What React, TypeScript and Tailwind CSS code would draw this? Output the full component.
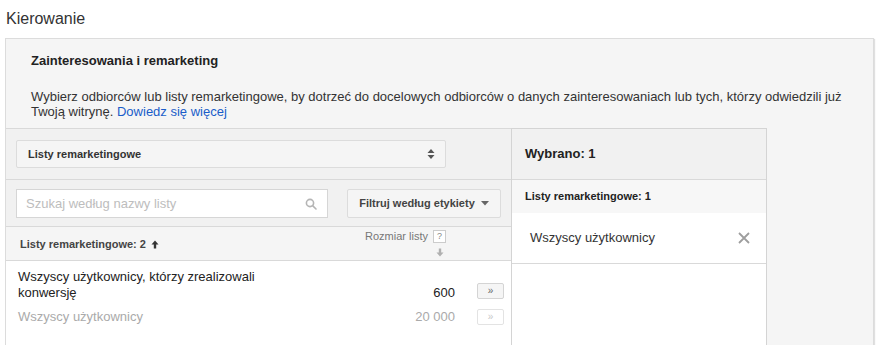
import React from 'react';

const font = { fontFamily: '"Liberation Sans", Arial, sans-serif' };

const SortCaret: React.FC = () => (
  <svg width="8" height="12" viewBox="0 0 8 12" className="text-[#555]">
    <path d="M4 1 L7.5 5 H0.5 Z" fill="currentColor" />
    <path d="M4 11 L7.5 7 H0.5 Z" fill="currentColor" />
  </svg>
);

const DownCaret: React.FC = () => (
  <svg width="8" height="5" viewBox="0 0 8 5">
    <path d="M0 0 H8 L4 4.5 Z" fill="#666" />
  </svg>
);

const SearchIcon: React.FC = () => (
  <svg width="12" height="12" viewBox="0 0 12 12" fill="none" stroke="#b5b5b5" strokeWidth="1.6">
    <circle cx="5" cy="5" r="3.6" />
    <path d="M7.6 7.6 L11 11" strokeLinecap="round" />
  </svg>
);

const ArrowUp: React.FC = () => (
  <svg width="8" height="9" viewBox="0 0 8 9">
    <path d="M4 0.5 L7.5 4.5 H5.2 V8.5 H2.8 V4.5 H0.5 Z" fill="#333" />
  </svg>
);

const ArrowDown: React.FC = () => (
  <svg width="8" height="9" viewBox="0 0 8 9">
    <path d="M4 8.5 L7.5 4.5 H5.2 V0.5 H2.8 V4.5 H0.5 Z" fill="#b0b0b0" />
  </svg>
);

const CloseIcon: React.FC = () => (
  <svg width="12" height="12" viewBox="0 0 12 12" stroke="#9e9e9e" strokeWidth="1.8">
    <path d="M1 1 L11 11 M11 1 L1 11" />
  </svg>
);

const AddButton: React.FC<{ disabled?: boolean }> = ({ disabled }) => (
  <div
    className={
      disabled
        ? 'w-[27px] h-[16px] border border-[#e3e3e3] bg-white rounded-[2px] flex items-center justify-center text-[10px] leading-none text-[#c8c8c8]'
        : 'w-[27px] h-[16px] border border-[#d4d4d4] bg-[#f5f5f5] rounded-[2px] flex items-center justify-center text-[10px] leading-none text-[#666]'
    }
  >
    »
  </div>
);

export default function App() {
  return (
    <div className="w-[879px] h-[345px] overflow-hidden bg-white" style={font}>
      <div className="pl-[6px] pt-[9px] h-[38px] text-[16px] leading-[20px] text-[#333]">Kierowanie</div>

      <div className="ml-[5px] w-[869px] h-[320px] border border-[#dcdcdc] bg-[#f5f5f5] shadow-[1px_1px_1px_rgba(0,0,0,0.12)]">
        {/* Header */}
        <div className="pl-[25px] pt-[14px] text-[13px] leading-[16px] font-bold text-[#222]">
          Zainteresowania i remarketing
        </div>
        <p className="pl-[25px] pr-[20px] mt-[20px] text-[13px] leading-[15px] text-[#333]">
          Wybierz odbiorców lub listy remarketingowe, by dotrzeć do docelowych odbiorców o danych zainteresowaniach lub tych, którzy odwiedzili już
          <br />
          Twoją witrynę. <span className="text-[#1a5dc9]">Dowiedz się więcej</span>
        </p>

        {/* Panels */}
        <div className="flex mt-[9px] h-[300px]">
          {/* Left column */}
          <div className="w-[505px] border-t border-[#d9d9d9] flex flex-col bg-white">
            <div className="bg-[#f1f1f1] border-b border-[#d9d9d9] px-[10px] py-[11px]">
              <div className="w-[430px] h-[28px] border border-[#dcdcdc] bg-[#f5f5f5] rounded-[2px] flex items-center justify-between pl-[11px] pr-[10px]">
                <span className="text-[11px] font-bold text-[#333]">Listy remarketingowe</span>
                <SortCaret />
              </div>
            </div>

            <div className="bg-[#f1f1f1] border-b border-[#d9d9d9] flex items-center justify-between pl-[10px] pr-[10px] pt-[9px] pb-[8px]">
              <div className="w-[312px] h-[29px] border border-[#d6d6d6] bg-white flex items-center justify-between pl-[9px] pr-[10px]">
                <span className="text-[13px] text-[#bdbdbd]">Szukaj według nazwy listy</span>
                <SearchIcon />
              </div>
              <div className="w-[154px] h-[29px] border border-[#dcdcdc] bg-[#f5f5f5] rounded-[2px] flex items-center justify-center gap-[6px]">
                <span className="text-[11px] font-bold text-[#444]">Filtruj według etykiety</span>
                <DownCaret />
              </div>
            </div>

            <div className="bg-[#f5f5f5] border-b border-[#d9d9d9] h-[34px] flex items-center justify-between pl-[14px] pr-[65px]">
              <div className="flex items-center gap-[5px] mt-[2px]">
                <span className="text-[11px] font-bold text-[#444]">Listy remarketingowe: 2</span>
                <ArrowUp />
              </div>
              <div className="flex flex-col items-end -mt-[2px]">
                <div className="flex items-center gap-[5px]">
                  <span className="text-[11px] text-[#777]">Rozmiar listy</span>
                  <span className="w-[13px] h-[13px] border border-[#ccc] bg-white text-[9px] leading-[11px] text-[#888] text-center">?</span>
                </div>
                <div className="mr-[2px] mt-[3px] flex">
                  <ArrowDown />
                </div>
              </div>
            </div>

            <div className="pt-[8px] pl-[12px] pr-[7px] flex flex-col gap-[8px]">
              <div className="flex items-end">
                <div className="w-[300px] text-[13px] leading-[16px] text-[#222]">
                  Wszyscy użytkownicy, którzy zrealizowali
                  <br />
                  konwersję
                </div>
                <div className="flex-1 text-right text-[13px] leading-[16px] text-[#222]">600</div>
                <div className="ml-[22px] mb-[2px]">
                  <AddButton />
                </div>
              </div>
              <div className="flex items-end">
                <div className="w-[300px] text-[13px] leading-[16px] text-[#aaa]">Wszyscy użytkownicy</div>
                <div className="flex-1 text-right text-[13px] leading-[16px] text-[#aaa]">20 000</div>
                <div className="ml-[22px]">
                  <AddButton disabled />
                </div>
              </div>
            </div>
          </div>

          {/* Right column */}
          <div className="w-[256px] border border-b-0 border-[#d4d4d4] flex flex-col bg-white">
            <div className="h-[51px] bg-[#f1f1f1] border-b border-[#d9d9d9] flex items-center pl-[13px] text-[13px] font-bold text-[#222]">
              Wybrano: 1
            </div>
            <div className="h-[33px] bg-[#f7f7f7] flex items-center pl-[13px] text-[11px] font-bold text-[#222]">
              Listy remarketingowe: 1
            </div>
            <div className="h-[51px] border-b border-[#d9d9d9] flex items-center justify-between pl-[18px] pr-[16px]">
              <span className="text-[13px] text-[#333]">Wszyscy użytkownicy</span>
              <CloseIcon />
            </div>
          </div>
        </div>
      </div>
    </div>
  );
}
